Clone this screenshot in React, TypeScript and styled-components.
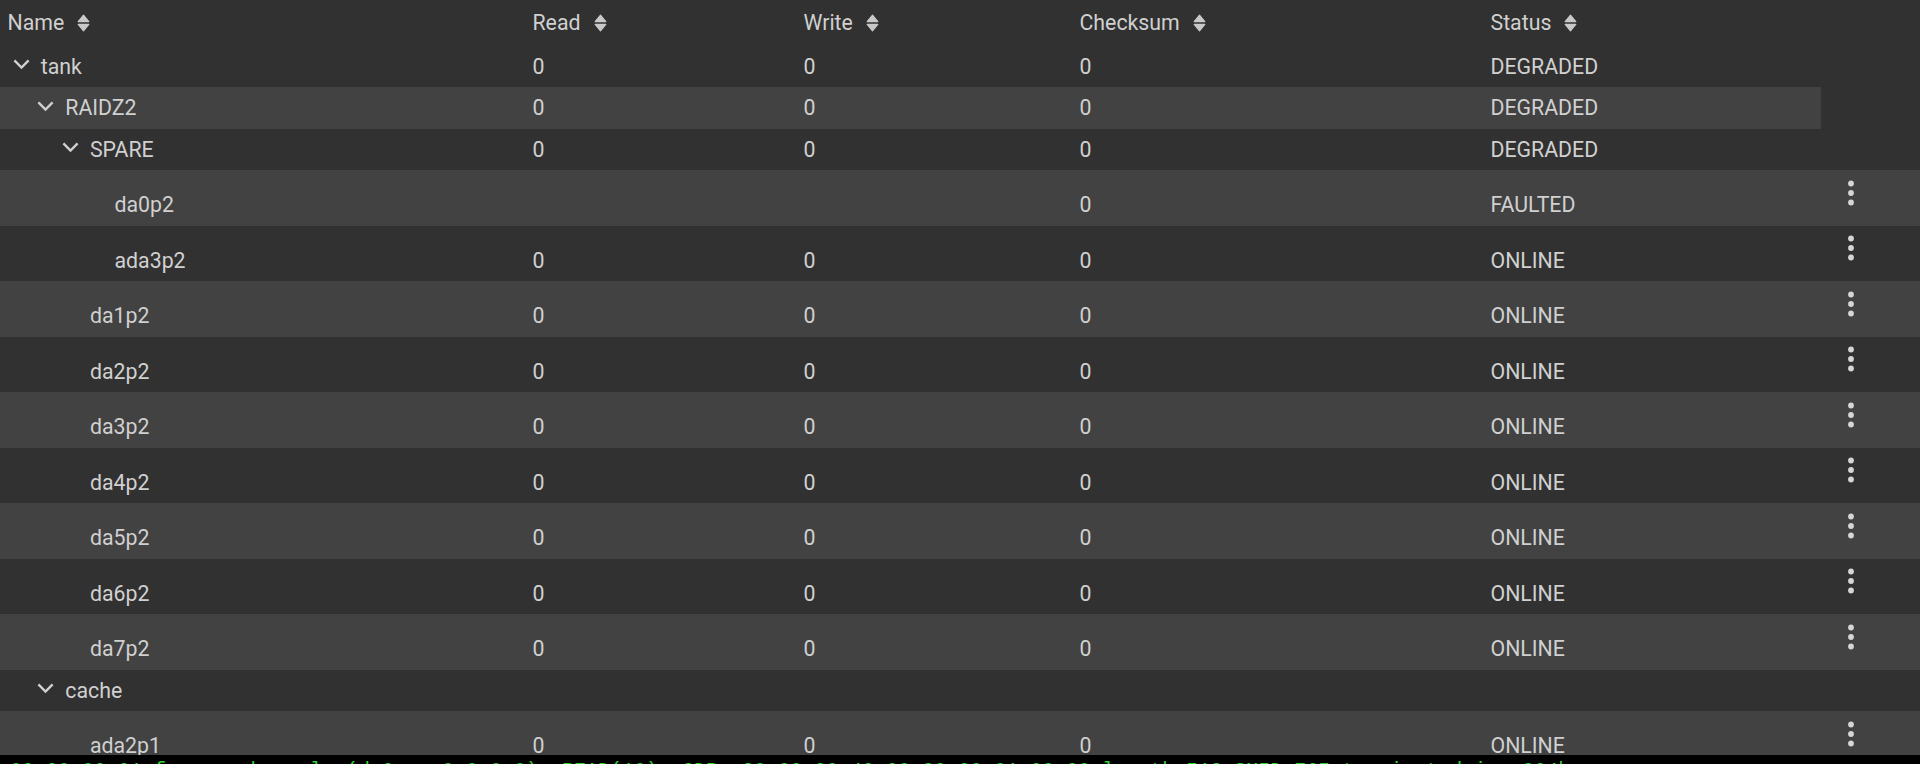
import React from "react";
import styled, { createGlobalStyle } from "styled-components";

type PoolRow = {
  name: string;
  level: number;
  group?: boolean;
  read: string;
  write: string;
  checksum: string;
  status: string;
};

const rows: PoolRow[] = [
  { name: "tank", level: 0, group: true, read: "0", write: "0", checksum: "0", status: "DEGRADED" },
  { name: "RAIDZ2", level: 1, group: true, read: "0", write: "0", checksum: "0", status: "DEGRADED" },
  { name: "SPARE", level: 2, group: true, read: "0", write: "0", checksum: "0", status: "DEGRADED" },
  { name: "da0p2", level: 3, read: "", write: "", checksum: "0", status: "FAULTED" },
  { name: "ada3p2", level: 3, read: "0", write: "0", checksum: "0", status: "ONLINE" },
  { name: "da1p2", level: 2, read: "0", write: "0", checksum: "0", status: "ONLINE" },
  { name: "da2p2", level: 2, read: "0", write: "0", checksum: "0", status: "ONLINE" },
  { name: "da3p2", level: 2, read: "0", write: "0", checksum: "0", status: "ONLINE" },
  { name: "da4p2", level: 2, read: "0", write: "0", checksum: "0", status: "ONLINE" },
  { name: "da5p2", level: 2, read: "0", write: "0", checksum: "0", status: "ONLINE" },
  { name: "da6p2", level: 2, read: "0", write: "0", checksum: "0", status: "ONLINE" },
  { name: "da7p2", level: 2, read: "0", write: "0", checksum: "0", status: "ONLINE" },
  { name: "cache", level: 1, group: true, read: "", write: "", checksum: "", status: "" },
  { name: "ada2p1", level: 2, read: "0", write: "0", checksum: "0", status: "ONLINE" },
];

const headers = ["Name", "Read", "Write", "Checksum", "Status"];

const SortIcon = () => (
  <svg width="13" height="18" viewBox="0 0 13 18">
    <path d="M1.2 7.6 L6.5 1.2 L11.8 7.6 Z" fill="#c9c9c9" stroke="#c9c9c9" strokeWidth="1.2" strokeLinejoin="round" />
    <path d="M1.2 10.4 L11.8 10.4 L6.5 16.8 Z" fill="#c9c9c9" stroke="#c9c9c9" strokeWidth="1.2" strokeLinejoin="round" />
  </svg>
);

const Chevron = () => (
  <svg width="17" height="11" viewBox="0 0 17 11">
    <path d="M1.4 1.4 L8.5 8.5 L15.6 1.4" fill="none" stroke="#d0d0d0" strokeWidth="2.4" />
  </svg>
);

const Kebab = () => (
  <svg width="8" height="28" viewBox="0 0 8 28">
    <circle cx="4" cy="4.5" r="2.9" fill="#d6d6d6" />
    <circle cx="4" cy="14" r="2.9" fill="#d6d6d6" />
    <circle cx="4" cy="23.5" r="2.9" fill="#d6d6d6" />
  </svg>
);

export default function App() {
  return (
    <>
      <GlobalStyle />
      <Page>
        <TableArea>
          <HeaderRow>
            {headers.map((h) => (
              <HeaderCell key={h}>
                {h}
                <SortIcon />
              </HeaderCell>
            ))}
          </HeaderRow>
          {rows.map((r, i) => (
            <Row key={r.name} $leaf={!r.group} $light={i % 2 === 0}>
              <NameCell $leaf={!r.group} style={{ paddingLeft: 7 + r.level * 24.6 }}>
                <Toggle>{r.group && <Chevron />}</Toggle>
                {r.name}
              </NameCell>
              <Cell $leaf={!r.group}>{r.read}</Cell>
              <Cell $leaf={!r.group}>{r.write}</Cell>
              <Cell $leaf={!r.group}>{r.checksum}</Cell>
              <Cell $leaf={!r.group}>{r.status}</Cell>
              {!r.group && (
                <ActionCell>
                  <Kebab />
                </ActionCell>
              )}
            </Row>
          ))}
        </TableArea>
        <Console>
          00:00:00:01 freenas kernel: (da0:mps0:0:0:0): READ(10). CDB: 28 00 00 40 00 80 00 01 00 00 length 512 SMID 765 terminated ioc 804b
        </Console>
      </Page>
    </>
  );
}

const GlobalStyle = createGlobalStyle`
  html, body {
    margin: 0;
    padding: 0;
    background: #313131;
    overflow: hidden;
  }
  * {
    box-sizing: border-box;
  }
`;

const Page = styled.div`
  width: 1920px;
  height: 764px;
  display: flex;
  flex-direction: column;
  font-family: Roboto, "Noto Sans", sans-serif;
  font-size: 21.3px;
  line-height: 25px;
  color: #d0d0d0;
`;

const TableArea = styled.div`
  flex: 1;
  overflow: hidden;
  background: #313131;
`;

const columns = "525px 271px 276px 411px 239px 198px";

const HeaderRow = styled.div`
  display: grid;
  grid-template-columns: ${columns};
  height: 45.4px;
  align-items: center;
`;

const HeaderCell = styled.div`
  display: flex;
  align-items: center;
  gap: 13px;
  padding-left: 7.5px;
  white-space: nowrap;
`;

const Row = styled.div<{ $leaf: boolean; $light: boolean }>`
  display: grid;
  grid-template-columns: ${columns};
  width: ${(p) => (p.$leaf ? "1920px" : "1821px")};
  overflow: hidden;
  height: ${(p) => (p.$leaf ? "55.5px" : "41.6px")};
  align-items: ${(p) => (p.$leaf ? "start" : "center")};
  background: ${(p) => (p.$light ? "#313131" : "#424242")};
`;

const Cell = styled.div<{ $leaf: boolean }>`
  padding-left: 7.5px;
  padding-top: ${(p) => (p.$leaf ? "22px" : "0")};
  white-space: nowrap;
`;

const NameCell = styled(Cell)`
  display: flex;
  align-items: center;
`;

const Toggle = styled.span`
  width: 33.7px;
  flex: none;
  display: flex;
  align-items: center;
  padding-left: 5.7px;
  margin-top: -3px;
`;

const ActionCell = styled.div`
  padding-left: 125px;
  padding-top: 8.8px;
  display: flex;
`;

const Console = styled.div`
  height: 9px;
  flex: none;
  overflow: hidden;
  background: #000;
  color: #2fd42f;
  font-family: "Liberation Mono", monospace;
  font-size: 20px;
  line-height: 22px;
  padding: 5px 0 0 10px;
  white-space: nowrap;
`;
